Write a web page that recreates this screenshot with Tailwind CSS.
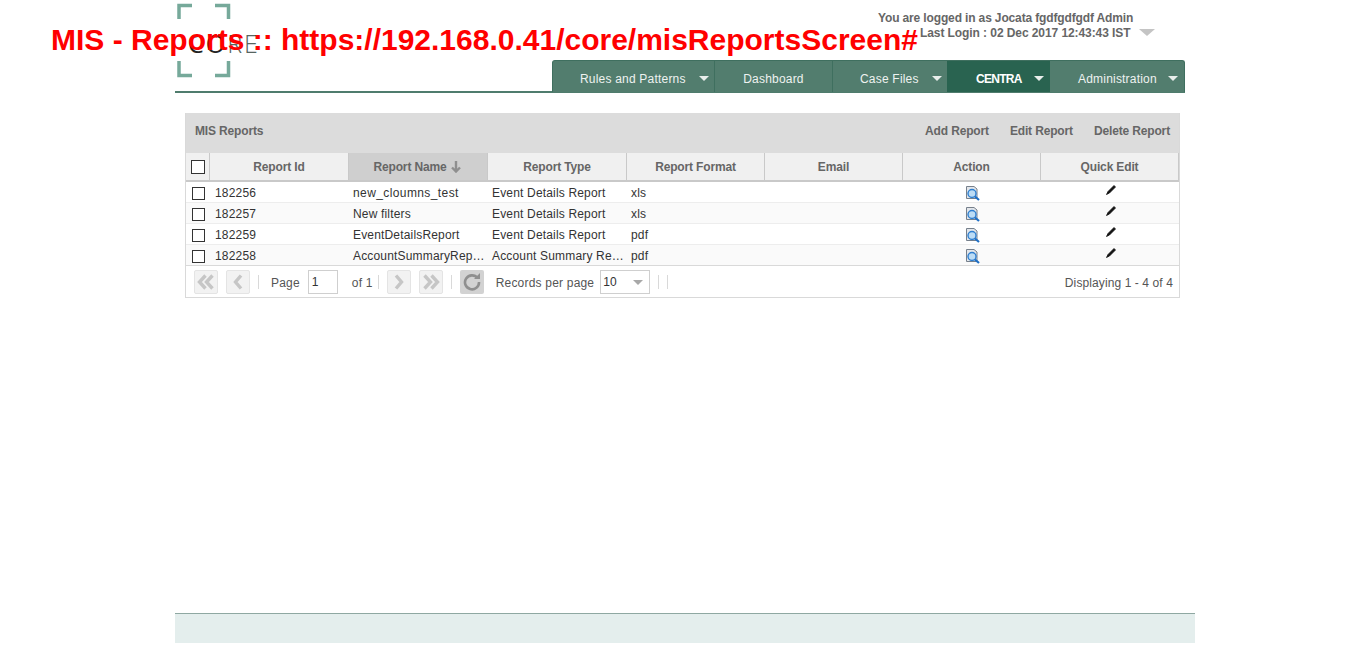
<!DOCTYPE html>
<html>
<head>
<meta charset="utf-8">
<script src="https://cdn.jsdelivr.net/npm/@tailwindcss/browser@4"></script>
</head>
<body class="bg-white font-['Liberation_Sans',Arial,sans-serif] text-xs text-[#333]">
<div class="relative h-[658px] w-[1349px] overflow-hidden">
  <h1 class="absolute left-[51px] top-[22px] z-10 text-[30px] leading-[36px] font-bold whitespace-nowrap text-[#ff0000]">MIS - Reports :: https://192.168.0.41/core/misReportsScreen#</h1>

  <div class="ml-[175px] w-[1020px]">
    <header class="relative flex h-[93px] w-[1010px] items-end justify-end border-b-2 border-[#4f7c6d]">
      <div class="absolute left-[2px] top-[3px] h-[75px] w-[56px]">
        <svg width="54" height="75" viewBox="0 0 54 75" fill="none" stroke="#76a99a" stroke-width="3.5">
          <path d="M15 2.5H2V16"/><path d="M38 2.5H51.5V16"/><path d="M2 58V72.5H15"/><path d="M51.5 58V72.5H38"/>
        </svg>
        <span class="absolute left-[11px] top-[26px] font-['Open_Sans',sans-serif] text-[25px] leading-[28px] font-light tracking-[2px] text-[#56655f] whitespace-nowrap"><span class="font-normal text-[#222]">CO</span>RE</span>
      </div>
      <div class="absolute left-[703px] top-[11px] w-[255px] font-bold leading-[15px] text-[#666] whitespace-nowrap">
        <div class="tracking-[-0.14px]">You are logged in as Jocata fgdfgdfgdf Admin</div>
        <div class="pl-[42px] tracking-[-0.08px]">Last Login : 02 Dec 2017 12:43:43 IST</div>
      </div>
      <div class="absolute left-[964px] top-[29px] h-0 w-0 border-x-[8px] border-t-[7px] border-x-transparent border-t-[#c4c4c4]"></div>
      <nav class="flex h-[32px] w-[633px] self-start mt-[60px] overflow-hidden rounded-t-[3px] border-x border-t border-[#3f6f5f] bg-[#527d6e] text-[#eef2f0] tracking-[0.2px]">
        <a class="flex w-[162px] items-center border-r border-[#3f6f5f] pl-[27px] pt-[4px]"><span>Rules and Patterns</span><span class="ml-[13px] h-0 w-0 border-x-[5px] border-t-[5px] border-x-transparent border-t-[#e8eeeb]"></span></a>
        <a class="flex w-[118px] items-center justify-center border-r border-[#3f6f5f] pt-[4px]">Dashboard</a>
        <a class="flex w-[114px] items-center pl-[27px] pt-[4px]"><span>Case Files</span><span class="ml-[13px] h-0 w-0 border-x-[5px] border-t-[5px] border-x-transparent border-t-[#e8eeeb]"></span></a>
        <a class="flex w-[103px] items-center bg-[#296350] pl-[29px] pt-[4px] font-bold text-white tracking-[-0.7px]"><span>CENTRA</span><span class="ml-[12px] h-0 w-0 border-x-[5px] border-t-[5px] border-x-transparent border-t-[#e8eeeb]"></span></a>
        <a class="flex flex-1 items-center pl-[28px] pt-[4px]"><span>Administration</span><span class="ml-[11px] h-0 w-0 border-x-[5px] border-t-[5px] border-x-transparent border-t-[#e8eeeb]"></span></a>
      </nav>
    </header>

    <main class="ml-[10px] mt-[20px] w-[995px] border-r border-b border-l border-[#d9d9d9]">
      <div class="flex h-[40px] items-center justify-between bg-[#dcdcdc] pb-[4px] pl-[9px] pr-[9px] font-bold tracking-[-0.15px] text-[#666]">
        <span>MIS Reports</span>
        <div class="flex gap-[21px]"><span>Add Report</span><span>Edit Report</span><span>Delete Report</span></div>
      </div>
      <div class="grid h-[29px] grid-cols-[24px_139px_139px_139px_138px_138px_138px_139px] border-b-2 border-[#c9c9c9] bg-[#f0f0f0] text-center font-bold tracking-[-0.15px] text-[#666]">
        <div class="flex items-center justify-center border-r border-[#c9c9c9]"><span class="h-[14px] w-[14px] border border-[#333] bg-white"></span></div>
        <div class="flex items-center justify-center border-r border-[#c9c9c9]">Report Id</div>
        <div class="flex items-center justify-center gap-[4px] border-r border-[#c9c9c9] bg-[#cfcfcf] pr-[2px]">Report Name
          <svg width="10" height="12" viewBox="0 0 10 12" fill="none" stroke="#8f8f8f" stroke-width="2.4"><path d="M5 0V10M1 6.5L5 10.5L9 6.5"/></svg>
        </div>
        <div class="flex items-center justify-center border-r border-[#c9c9c9]">Report Type</div>
        <div class="flex items-center justify-center border-r border-[#c9c9c9]">Report Format</div>
        <div class="flex items-center justify-center border-r border-[#c9c9c9]">Email</div>
        <div class="flex items-center justify-center border-r border-[#c9c9c9]">Action</div>
        <div class="flex items-center justify-center border-r border-[#c9c9c9] mr-px">Quick Edit</div>
      </div>

      <div class="grid h-[21px] grid-cols-[24px_139px_139px_139px_138px_138px_138px_139px] items-center border-b border-[#ededed] bg-white pt-[1px] tracking-[0.17px]">
        <div class="flex justify-center pt-[1px]"><span class="h-[13px] w-[13px] border border-[#333] bg-white"></span></div>
        <div class="pl-[5px]">182256</div><div class="pl-[4px] tracking-[0.4px]">new_cloumns_test</div><div class="pl-[4px]">Event Details Report</div><div class="pl-[4px]">xls</div><div></div>
        <div class="flex justify-center pl-[1px] pt-[2px]"><svg width="14" height="15" viewBox="0 0 14 15" fill="none"><path d="M0.5 0.5H8L11 3V12.5H0.5Z" fill="#e3e6ea" stroke="#76808c"/><circle cx="6" cy="7.5" r="4" fill="#bcdcf5" stroke="#2f7fd0" stroke-width="1.4"/><path d="M9 10.5L13 14" stroke="#1f6fc5" stroke-width="2.2"/></svg></div>
        <div class="flex justify-center pb-[6px]"><svg width="10" height="10" viewBox="0 0 10 10" fill="none"><path d="M8 0.5L9.5 2L3.5 8L0.5 9.5L2 6.5Z" fill="#111" stroke="#111" stroke-width="0.8"/></svg></div>
      </div>
      <div class="grid h-[21px] grid-cols-[24px_139px_139px_139px_138px_138px_138px_139px] items-center border-b border-[#ededed] bg-[#fafafa] pt-[1px] tracking-[0.17px]">
        <div class="flex justify-center pt-[1px]"><span class="h-[13px] w-[13px] border border-[#333] bg-white"></span></div>
        <div class="pl-[5px]">182257</div><div class="pl-[4px]">New filters</div><div class="pl-[4px]">Event Details Report</div><div class="pl-[4px]">xls</div><div></div>
        <div class="flex justify-center pl-[1px] pt-[2px]"><svg width="14" height="15" viewBox="0 0 14 15" fill="none"><path d="M0.5 0.5H8L11 3V12.5H0.5Z" fill="#e3e6ea" stroke="#76808c"/><circle cx="6" cy="7.5" r="4" fill="#bcdcf5" stroke="#2f7fd0" stroke-width="1.4"/><path d="M9 10.5L13 14" stroke="#1f6fc5" stroke-width="2.2"/></svg></div>
        <div class="flex justify-center pb-[6px]"><svg width="10" height="10" viewBox="0 0 10 10" fill="none"><path d="M8 0.5L9.5 2L3.5 8L0.5 9.5L2 6.5Z" fill="#111" stroke="#111" stroke-width="0.8"/></svg></div>
      </div>
      <div class="grid h-[21px] grid-cols-[24px_139px_139px_139px_138px_138px_138px_139px] items-center border-b border-[#ededed] bg-white pt-[1px] tracking-[0.17px]">
        <div class="flex justify-center pt-[1px]"><span class="h-[13px] w-[13px] border border-[#333] bg-white"></span></div>
        <div class="pl-[5px]">182259</div><div class="pl-[4px]">EventDetailsReport</div><div class="pl-[4px]">Event Details Report</div><div class="pl-[4px]">pdf</div><div></div>
        <div class="flex justify-center pl-[1px] pt-[2px]"><svg width="14" height="15" viewBox="0 0 14 15" fill="none"><path d="M0.5 0.5H8L11 3V12.5H0.5Z" fill="#e3e6ea" stroke="#76808c"/><circle cx="6" cy="7.5" r="4" fill="#bcdcf5" stroke="#2f7fd0" stroke-width="1.4"/><path d="M9 10.5L13 14" stroke="#1f6fc5" stroke-width="2.2"/></svg></div>
        <div class="flex justify-center pb-[6px]"><svg width="10" height="10" viewBox="0 0 10 10" fill="none"><path d="M8 0.5L9.5 2L3.5 8L0.5 9.5L2 6.5Z" fill="#111" stroke="#111" stroke-width="0.8"/></svg></div>
      </div>
      <div class="grid h-[21px] grid-cols-[24px_139px_139px_139px_138px_138px_138px_139px] items-center border-b border-[#d9d9d9] bg-[#fafafa] pt-[1px] tracking-[0.17px]">
        <div class="flex justify-center pt-[1px]"><span class="h-[13px] w-[13px] border border-[#333] bg-white"></span></div>
        <div class="truncate pl-[5px]">182258</div><div class="truncate pl-[4px] pr-[3px]">AccountSummaryReport</div><div class="truncate pl-[4px] pr-[1px]">Account Summary Report</div><div class="pl-[4px]">pdf</div><div></div>
        <div class="flex justify-center pl-[1px] pt-[2px]"><svg width="14" height="15" viewBox="0 0 14 15" fill="none"><path d="M0.5 0.5H8L11 3V12.5H0.5Z" fill="#e3e6ea" stroke="#76808c"/><circle cx="6" cy="7.5" r="4" fill="#bcdcf5" stroke="#2f7fd0" stroke-width="1.4"/><path d="M9 10.5L13 14" stroke="#1f6fc5" stroke-width="2.2"/></svg></div>
        <div class="flex justify-center pb-[6px]"><svg width="10" height="10" viewBox="0 0 10 10" fill="none"><path d="M8 0.5L9.5 2L3.5 8L0.5 9.5L2 6.5Z" fill="#111" stroke="#111" stroke-width="0.8"/></svg></div>
      </div>

      <div class="flex h-[31px] items-center pl-[8px] pr-[6px] tracking-[0.2px] text-[#555]">
        <span class="flex h-[24px] w-[24px] items-center justify-center rounded-[2px] border border-[#e4e4e4] bg-[#f2f2f2]"><svg width="18" height="16" viewBox="0 0 18 16" fill="none" stroke="#c6c6c6" stroke-width="3.4"><path d="M8.5 1.5L2.5 8L8.5 14.5M15.5 1.5L9.5 8L15.5 14.5"/></svg></span>
        <span class="ml-[8px] flex h-[24px] w-[24px] items-center justify-center rounded-[2px] border border-[#e4e4e4] bg-[#f2f2f2]"><svg width="10" height="16" viewBox="0 0 10 16" fill="none" stroke="#c6c6c6" stroke-width="3.4"><path d="M8 1.5L2.5 8L8 14.5"/></svg></span>
        <span class="ml-[8px] h-[14px] w-px bg-[#d9d9d9]"></span>
        <span class="ml-[12px] pt-[2px]">Page</span>
        <span class="ml-[8px] flex h-[24px] w-[30px] items-center border border-[#cfcfcf] bg-white pl-[3px] text-[#333]">1</span>
        <span class="ml-[14px] pt-[2px]">of 1</span>
        <span class="ml-[5px] h-[14px] w-px bg-[#d9d9d9]"></span>
        <span class="ml-[8px] flex h-[24px] w-[24px] items-center justify-center rounded-[2px] border border-[#e4e4e4] bg-[#f2f2f2]"><svg width="10" height="16" viewBox="0 0 10 16" fill="none" stroke="#c6c6c6" stroke-width="3.4"><path d="M2 1.5L7.5 8L2 14.5"/></svg></span>
        <span class="ml-[8px] flex h-[24px] w-[24px] items-center justify-center rounded-[2px] border border-[#e4e4e4] bg-[#f2f2f2]"><svg width="18" height="16" viewBox="0 0 18 16" fill="none" stroke="#c6c6c6" stroke-width="3.4"><path d="M2.5 1.5L8.5 8L2.5 14.5M9.5 1.5L15.5 8L9.5 14.5"/></svg></span>
        <span class="ml-[8px] h-[14px] w-px bg-[#d9d9d9]"></span>
        <span class="ml-[8px] flex h-[24px] w-[24px] items-center justify-center rounded-[2px] bg-[#d2d2d2]"><svg width="18" height="18" viewBox="0 0 18 18" fill="none"><path d="M14.5 5A7 7 0 1 0 16 9" stroke="#8f8f8f" stroke-width="2.6"/><path d="M11 6H17V0Z" fill="#8f8f8f"/></svg></span>
        <span class="ml-[12px] pt-[2px]">Records per page</span>
        <span class="relative ml-[6px] flex h-[24px] w-[50px] items-center border border-[#cfcfcf] bg-white pl-[2px] text-[#333]">10<span class="absolute right-[6px] top-[9px] h-0 w-0 border-x-[5px] border-t-[5px] border-x-transparent border-t-[#a8a8a8]"></span></span>
        <span class="ml-[8px] h-[14px] w-px bg-[#d9d9d9]"></span>
        <span class="ml-[8px] h-[14px] w-px bg-[#d9d9d9]"></span>
        <span class="ml-auto pt-[2px] tracking-[0.1px]">Displaying 1 - 4 of 4</span>
      </div>
    </main>

    <footer class="mt-[315px] h-[30px] border-t border-[#8fa8a2] bg-[#e4eeed]"></footer>
  </div>
</div>
</body>
</html>
